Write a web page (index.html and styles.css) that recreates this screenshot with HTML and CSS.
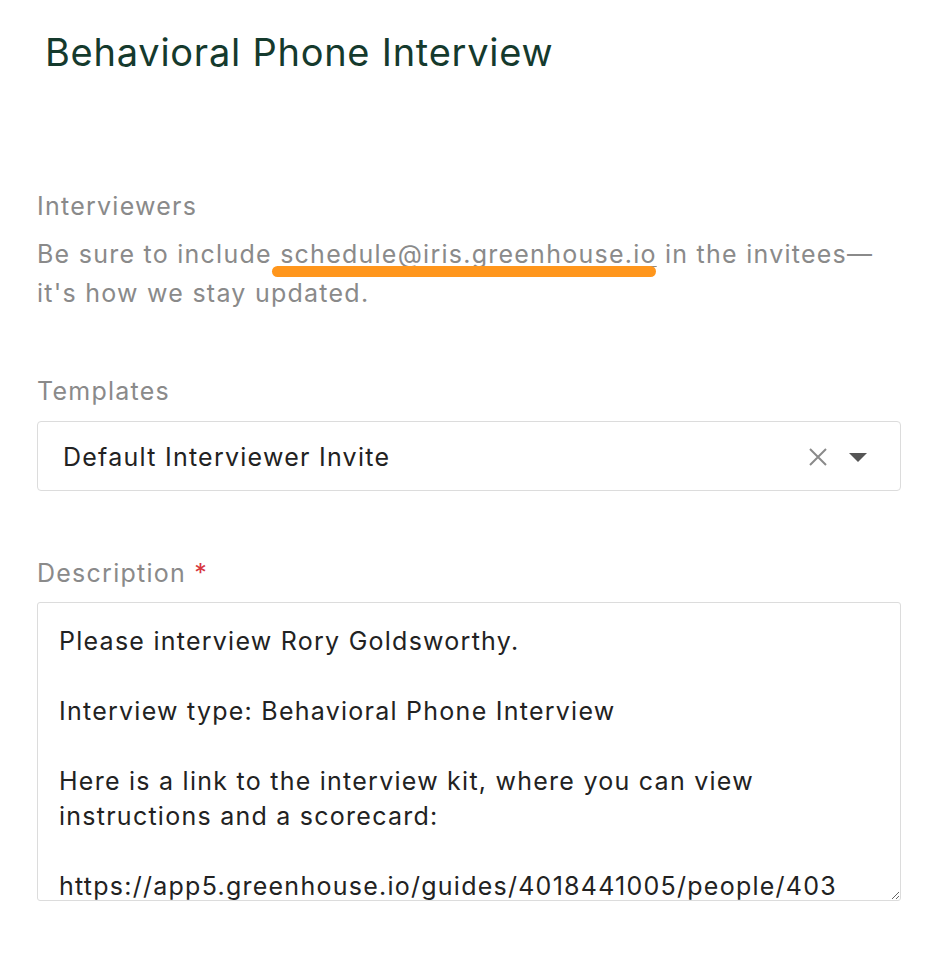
FILE: index.html
```html
<!DOCTYPE html>
<html>
<head>
<meta charset="utf-8">
<link rel="stylesheet" href="styles.css">
</head>
<body>
<div class="page">
  <h1 class="title">Behavioral Phone Interview</h1>

  <section class="field field-interviewers">
    <div class="label">Interviewers</div>
    <p class="hint">Be sure to include <span class="email">schedule@iris.greenhouse.io</span> in the invitees—it's how we stay updated.</p>
  </section>

  <section class="field field-templates">
    <div class="label">Templates</div>
    <div class="select">
      <span class="select-value">Default Interviewer Invite</span>
      <span class="select-icons">
        <svg class="icon-clear" width="20" height="20" viewBox="0 0 20 20"><path d="M2 2 L18 18 M18 2 L2 18" stroke="#8a8a8a" stroke-width="2" fill="none"/></svg>
        <svg class="icon-arrow" width="20" height="11" viewBox="0 0 20 11"><path d="M1 1 L19 1 L10 10 Z" fill="#555"/></svg>
      </span>
    </div>
  </section>

  <section class="field field-description">
    <div class="label">Description <span class="req">*</span></div>
    <textarea class="textarea" readonly>Please interview Rory Goldsworthy.

Interview type: Behavioral Phone Interview

Here is a link to the interview kit, where you can view instructions and a scorecard:

https://app5.greenhouse.io/guides/4018441005/people/4030718005</textarea>
  </section>
</div>
</body>
</html>
```

FILE: styles.css
```css
html, body {
  margin: 0;
  padding: 0;
  background: #ffffff;
}

body {
  font-family: Inter, "Noto Sans", "Liberation Sans", sans-serif;
}

.page {
  padding: 30px 37px 0 37px;
  width: 864px;
}

.title {
  margin: 0;
  padding-left: 8px;
  font-size: 38px;
  line-height: 44px;
  font-weight: 400;
  color: #153a2d;
  letter-spacing: 0.75px;
}

.field {
  display: flex;
  flex-direction: column;
}

.field-interviewers {
  margin-top: 116px;
}

.field-templates {
  margin-top: 62px;
}

.field-description {
  margin-top: 66px;
}

.label {
  font-size: 25px;
  line-height: 32px;
  letter-spacing: 1.25px;
  color: #8a8a8a;
}

.req {
  color: #d7373f;
}

.hint {
  margin: 13px 0 0 0;
  font-size: 25px;
  line-height: 39px;
  letter-spacing: 1.25px;
  color: #8a8a8a;
}

.email {
  position: relative;
  text-decoration: underline;
  text-decoration-thickness: 1px;
  text-underline-offset: 3px;
}

.email::after {
  content: "";
  position: absolute;
  left: -8px;
  right: 1px;
  bottom: -8px;
  height: 11px;
  border-radius: 6px;
  background: #ff961c;
}

.select {
  margin-top: 14px;
  box-sizing: border-box;
  height: 70px;
  border: 1px solid #dcdcdc;
  border-radius: 4px;
  display: flex;
  align-items: center;
  justify-content: space-between;
  padding: 0 32px 0 25px;
}

.select-value {
  font-size: 25px;
  letter-spacing: 1.25px;
  color: #222222;
  margin-top: 2px;
}

.select-icons {
  display: flex;
  align-items: center;
  gap: 20px;
  margin-top: 2px;
}

.icon-clear {
  width: 20px;
  height: 20px;
}

.textarea {
  margin-top: 13px;
  box-sizing: border-box;
  width: 864px;
  height: 299px;
  border: 1px solid #dcdcdc;
  border-radius: 3px;
  padding: 21px 55px 0 21px;
  font-family: Inter, "Noto Sans", "Liberation Sans", sans-serif;
  font-size: 25px;
  line-height: 35px;
  letter-spacing: 1.25px;
  color: #222222;
  overflow: hidden;
  resize: both;
  outline: none;
  background: #fff;
}
```
